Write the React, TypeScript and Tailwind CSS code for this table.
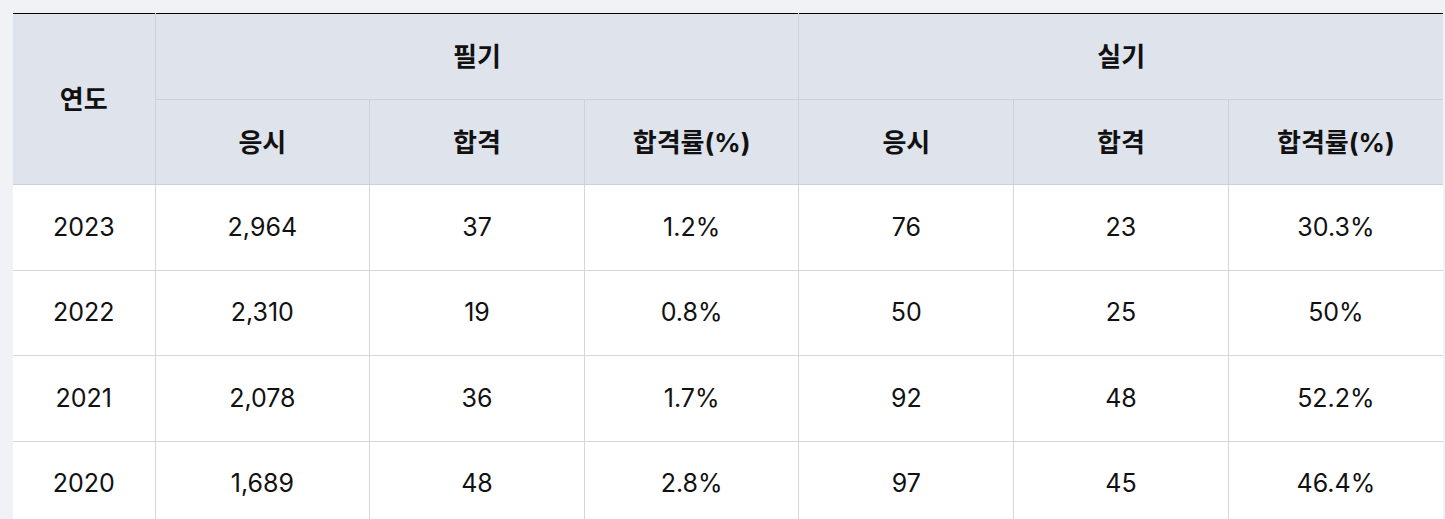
const rows = [
  ["2023", "2,964", "37", "1.2%", "76", "23", "30.3%"],
  ["2022", "2,310", "19", "0.8%", "50", "25", "50%"],
  ["2021", "2,078", "36", "1.7%", "92", "48", "52.2%"],
  ["2020", "1,689", "48", "2.8%", "97", "45", "46.4%"],
];

const App = () => {
  return (
    <div className="min-h-screen bg-[#f0f2f6] pl-[13px] pt-[13px] font-['Inter','Noto_Sans_CJK_KR',sans-serif] text-[#111111]">
      <table className="w-[1430px] table-fixed border-collapse border-t border-t-black text-center text-[25px]">
        <colgroup>
          <col className="w-[142px]" />
          <col />
          <col />
          <col />
          <col />
          <col />
          <col />
        </colgroup>
        <thead className="bg-[#dfe3ec] text-[26px] font-bold">
          <tr className="h-[86px]">
            <th rowSpan={2} className="border-r border-b border-[#cfd1d6]">
              연도
            </th>
            <th colSpan={3} className="border-r border-b border-[#cfd1d6]">
              필기
            </th>
            <th colSpan={3} className="border-b border-[#cfd1d6]">
              실기
            </th>
          </tr>
          <tr className="h-[85px]">
            {["응시", "합격", "합격률(%)", "응시", "합격", "합격률(%)"].map(
              (label, i) => (
                <th
                  key={i}
                  className={`border-b border-[#cfd1d6] ${i < 5 ? "border-r" : ""}`}
                >
                  {label}
                </th>
              )
            )}
          </tr>
        </thead>
        <tbody className="bg-white">
          {rows.map((row) => (
            <tr key={row[0]} className="h-[85.5px]">
              {row.map((cell, i) => (
                <td
                  key={i}
                  className={`border-b border-[#d6d6d6] ${i < 6 ? "border-r" : ""}`}
                >
                  {cell}
                </td>
              ))}
            </tr>
          ))}
        </tbody>
      </table>
    </div>
  );
};

export default App;
